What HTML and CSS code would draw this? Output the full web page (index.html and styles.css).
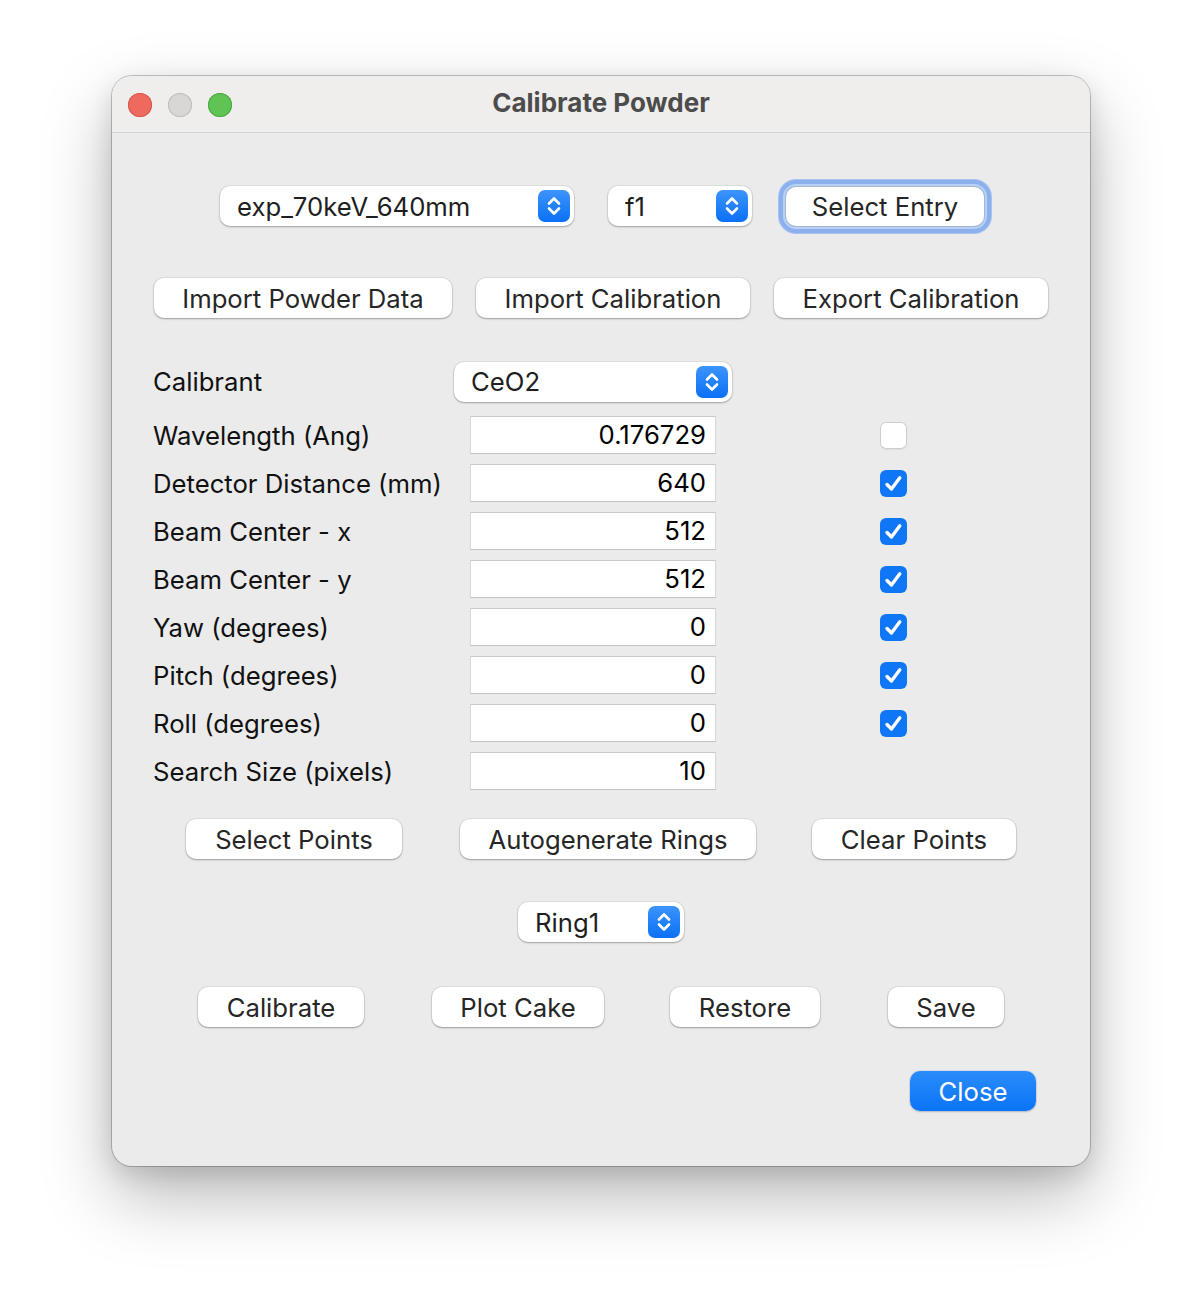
FILE: index.html
```html
<!DOCTYPE html>
<html>
<head>
<meta charset="utf-8">
<title>Calibrate Powder</title>
<link rel="stylesheet" href="styles.css">
</head>
<body>
<div class="window">
  <div class="titlebar">
    <div class="lights">
      <span class="light red"></span>
      <span class="light gray"></span>
      <span class="light green"></span>
    </div>
    <div class="title">Calibrate Powder</div>
  </div>
  <div class="content">
    <div class="row row-entry">
      <div class="popup popup-exp"><span class="popup-text">exp_70keV_640mm</span><span class="stepper"><svg viewBox="0 0 32 32" width="32" height="32"><path d="M11 13.5 L16 8.5 L21 13.5 M11 18.5 L16 23.5 L21 18.5" fill="none" stroke="#fff" stroke-width="2.6" stroke-linecap="round" stroke-linejoin="round"/></svg></span></div>
      <div class="popup popup-f1"><span class="popup-text">f1</span><span class="stepper"><svg viewBox="0 0 32 32" width="32" height="32"><path d="M11 13.5 L16 8.5 L21 13.5 M11 18.5 L16 23.5 L21 18.5" fill="none" stroke="#fff" stroke-width="2.6" stroke-linecap="round" stroke-linejoin="round"/></svg></span></div>
      <div class="btn btn-focus">Select Entry</div>
    </div>

    <div class="row row-import">
      <div class="btn w-import">Import Powder Data</div>
      <div class="btn w-cal">Import Calibration</div>
      <div class="btn w-cal">Export Calibration</div>
    </div>

    <div class="form">
      <div class="frow frow-calibrant">
        <span class="label label-calibrant">Calibrant</span>
        <div class="popup popup-ceo2"><span class="popup-text">CeO2</span><span class="stepper"><svg viewBox="0 0 32 32" width="32" height="32"><path d="M11 13.5 L16 8.5 L21 13.5 M11 18.5 L16 23.5 L21 18.5" fill="none" stroke="#fff" stroke-width="2.6" stroke-linecap="round" stroke-linejoin="round"/></svg></span></div>
      </div>
      <div class="frow">
        <span class="label">Wavelength (Ang)</span>
        <div class="field">0.176729</div>
        <span class="check"></span>
      </div>
      <div class="frow">
        <span class="label">Detector Distance (mm)</span>
        <div class="field">640</div>
        <span class="check on"><svg viewBox="0 0 27 27" width="27" height="27"><path d="M7 14.5 L11.5 19 L19.8 7.8" fill="none" stroke="#fff" stroke-width="3.4" stroke-linecap="round" stroke-linejoin="round"/></svg></span>
      </div>
      <div class="frow">
        <span class="label">Beam Center - x</span>
        <div class="field">512</div>
        <span class="check on"><svg viewBox="0 0 27 27" width="27" height="27"><path d="M7 14.5 L11.5 19 L19.8 7.8" fill="none" stroke="#fff" stroke-width="3.4" stroke-linecap="round" stroke-linejoin="round"/></svg></span>
      </div>
      <div class="frow">
        <span class="label">Beam Center - y</span>
        <div class="field">512</div>
        <span class="check on"><svg viewBox="0 0 27 27" width="27" height="27"><path d="M7 14.5 L11.5 19 L19.8 7.8" fill="none" stroke="#fff" stroke-width="3.4" stroke-linecap="round" stroke-linejoin="round"/></svg></span>
      </div>
      <div class="frow">
        <span class="label">Yaw (degrees)</span>
        <div class="field">0</div>
        <span class="check on"><svg viewBox="0 0 27 27" width="27" height="27"><path d="M7 14.5 L11.5 19 L19.8 7.8" fill="none" stroke="#fff" stroke-width="3.4" stroke-linecap="round" stroke-linejoin="round"/></svg></span>
      </div>
      <div class="frow">
        <span class="label">Pitch (degrees)</span>
        <div class="field">0</div>
        <span class="check on"><svg viewBox="0 0 27 27" width="27" height="27"><path d="M7 14.5 L11.5 19 L19.8 7.8" fill="none" stroke="#fff" stroke-width="3.4" stroke-linecap="round" stroke-linejoin="round"/></svg></span>
      </div>
      <div class="frow">
        <span class="label">Roll (degrees)</span>
        <div class="field">0</div>
        <span class="check on"><svg viewBox="0 0 27 27" width="27" height="27"><path d="M7 14.5 L11.5 19 L19.8 7.8" fill="none" stroke="#fff" stroke-width="3.4" stroke-linecap="round" stroke-linejoin="round"/></svg></span>
      </div>
      <div class="frow frow-last">
        <span class="label">Search Size (pixels)</span>
        <div class="field">10</div>
      </div>
    </div>

    <div class="row row-points">
      <div class="btn w-select">Select Points</div>
      <div class="btn w-auto">Autogenerate Rings</div>
      <div class="btn w-clear">Clear Points</div>
    </div>

    <div class="row row-ring">
      <div class="popup popup-ring"><span class="popup-text">Ring1</span><span class="stepper"><svg viewBox="0 0 32 32" width="32" height="32"><path d="M11 13.5 L16 8.5 L21 13.5 M11 18.5 L16 23.5 L21 18.5" fill="none" stroke="#fff" stroke-width="2.6" stroke-linecap="round" stroke-linejoin="round"/></svg></span></div>
    </div>

    <div class="row row-actions">
      <div class="btn w-calibrate">Calibrate</div>
      <div class="btn w-plot">Plot Cake</div>
      <div class="btn w-restore">Restore</div>
      <div class="btn w-save">Save</div>
    </div>

    <div class="row row-close">
      <div class="btn btn-primary">Close</div>
    </div>
  </div>
</div>
</body>
</html>
```

FILE: styles.css
```css
* { box-sizing: border-box; }

html, body {
  margin: 0;
  padding: 0;
  background: #ffffff;
}

body {
  display: flex;
  align-items: flex-start;
  padding: 76px 0 0 112px;
  min-height: 1314px;
  font-family: "Inter", "Liberation Sans", sans-serif;
  font-size: 25.7px;
  color: #1e1e1e;
}

.window {
  width: 978px;
  height: 1090px;
  background: #ebebeb;
  border-radius: 20px;
  box-shadow: 0 0 0 1px rgba(0, 0, 0, 0.22), 0 30px 70px rgba(0, 0, 0, 0.28), 0 8px 24px rgba(0, 0, 0, 0.12);
  overflow: hidden;
  display: flex;
  flex-direction: column;
}

.titlebar {
  height: 57px;
  flex: none;
  background: #efeeed;
  border-bottom: 1px solid #d3d3d3;
  display: flex;
  align-items: center;
  position: relative;
}

.lights {
  display: flex;
  gap: 16px;
  padding-left: 16px;
  margin-top: 1px;
}

.light {
  width: 24px;
  height: 24px;
  border-radius: 50%;
  display: block;
}
.light.red { background: #ee6a5e; box-shadow: inset 0 0 0 1px #d5574c; }
.light.gray { background: #d8d7d6; box-shadow: inset 0 0 0 1px #bdbcbb; }
.light.green { background: #5fc454; box-shadow: inset 0 0 0 1px #4ca842; }

.title {
  position: absolute;
  left: 0;
  right: 0;
  text-align: center;
  font-weight: 700;
  font-size: 26px;
  color: #4c4c4c;
  top: 11px;
}

.content {
  display: flex;
  flex-direction: column;
}

.row {
  display: flex;
  align-items: center;
}

/* Popups */
.popup {
  height: 40px;
  background: #ffffff;
  border-radius: 10px;
  box-shadow: 0 0 0 1px rgba(0, 0, 0, 0.05), 0 1px 2px rgba(0, 0, 0, 0.28);
  display: flex;
  align-items: center;
  justify-content: space-between;
  padding: 0 4px 0 17px;
}

.popup-text {
  color: #1e1e1e;
}

.stepper {
  width: 32px;
  height: 32px;
  border-radius: 7px;
  background: linear-gradient(#3d94fb, #0b70f5);
  display: block;
}
.stepper svg { display: block; }

/* Buttons */
.btn {
  height: 40px;
  background: #ffffff;
  border-radius: 10px;
  box-shadow: 0 0 0 1px rgba(0, 0, 0, 0.05), 0 1px 2px rgba(0, 0, 0, 0.3);
  display: flex;
  align-items: center;
  justify-content: center;
  color: #262626;
  flex: none;
}

.btn-focus {
  width: 198px;
  height: 39px;
  margin-left: 34px;
  box-shadow: 0 0 0 1px rgba(0, 0, 0, 0.12), 0 0 0 3px #b9d0f5, 0 0 0 7px #8bb0ed, 0 0 0 8px #a8c3f0;
}

.btn-primary {
  width: 126px;
  background: linear-gradient(#2b8cfa, #0a74f7);
  color: #ffffff;
  box-shadow: 0 0 0 1px rgba(0, 80, 200, 0.08), 0 1px 2px rgba(0, 0, 0, 0.18);
  margin-left: 798px;
}

/* Row 1 */
.row-entry {
  margin-top: 49px;
  height: 48px;
}
.popup-exp { width: 354px; margin-left: 108px; }
.popup-f1 { width: 144px; margin-left: 34px; }

/* Row 2 */
.row-import {
  margin-top: 48px;
  padding-left: 42px;
  gap: 24px;
}
.w-import { width: 298px; }
.w-cal { width: 274px; }

/* Form */
.form {
  margin-top: 43px;
  display: flex;
  flex-direction: column;
  gap: 10px;
  padding-left: 41px;
}

.frow {
  display: flex;
  align-items: center;
  height: 38px;
}

.frow-calibrant {
  height: 41px;
  margin-bottom: 4px;
}

.label {
  width: 317px;
  flex: none;
  color: #111111;
}
.label-calibrant { width: 301px; }

.popup-ceo2 { width: 278px; }

.field {
  width: 246px;
  height: 38px;
  background: #ffffff;
  border: 1px solid #d6d6d6;
  border-top-color: #c9c9c9;
  border-bottom-color: #c4c4c4;
  text-align: right;
  padding-right: 9px;
  line-height: 36px;
  color: #000000;
  flex: none;
}

.check {
  width: 27px;
  height: 27px;
  margin-left: 164px;
  border-radius: 6px;
  background: #ffffff;
  box-shadow: inset 0 0 0 1px #cdcdcd, 0 1px 1px rgba(0, 0, 0, 0.06);
  display: block;
  flex: none;
}
.check.on {
  background: #0f77f6;
  box-shadow: none;
}
.check svg { display: block; }

/* Points row */
.row-points {
  margin-top: 29px;
  padding-left: 74px;
}
.w-select { width: 216px; }
.w-auto { width: 296px; margin-left: 58px; }
.w-clear { width: 204px; margin-left: 56px; }

/* Ring row */
.row-ring {
  margin-top: 43px;
}
.popup-ring { width: 166px; margin-left: 406px; }

/* Actions */
.row-actions {
  margin-top: 45px;
  padding-left: 86px;
}
.w-calibrate { width: 166px; }
.w-plot { width: 172px; margin-left: 68px; }
.w-restore { width: 150px; margin-left: 66px; }
.w-save { width: 116px; margin-left: 68px; }

.row-close {
  margin-top: 44px;
}
```
